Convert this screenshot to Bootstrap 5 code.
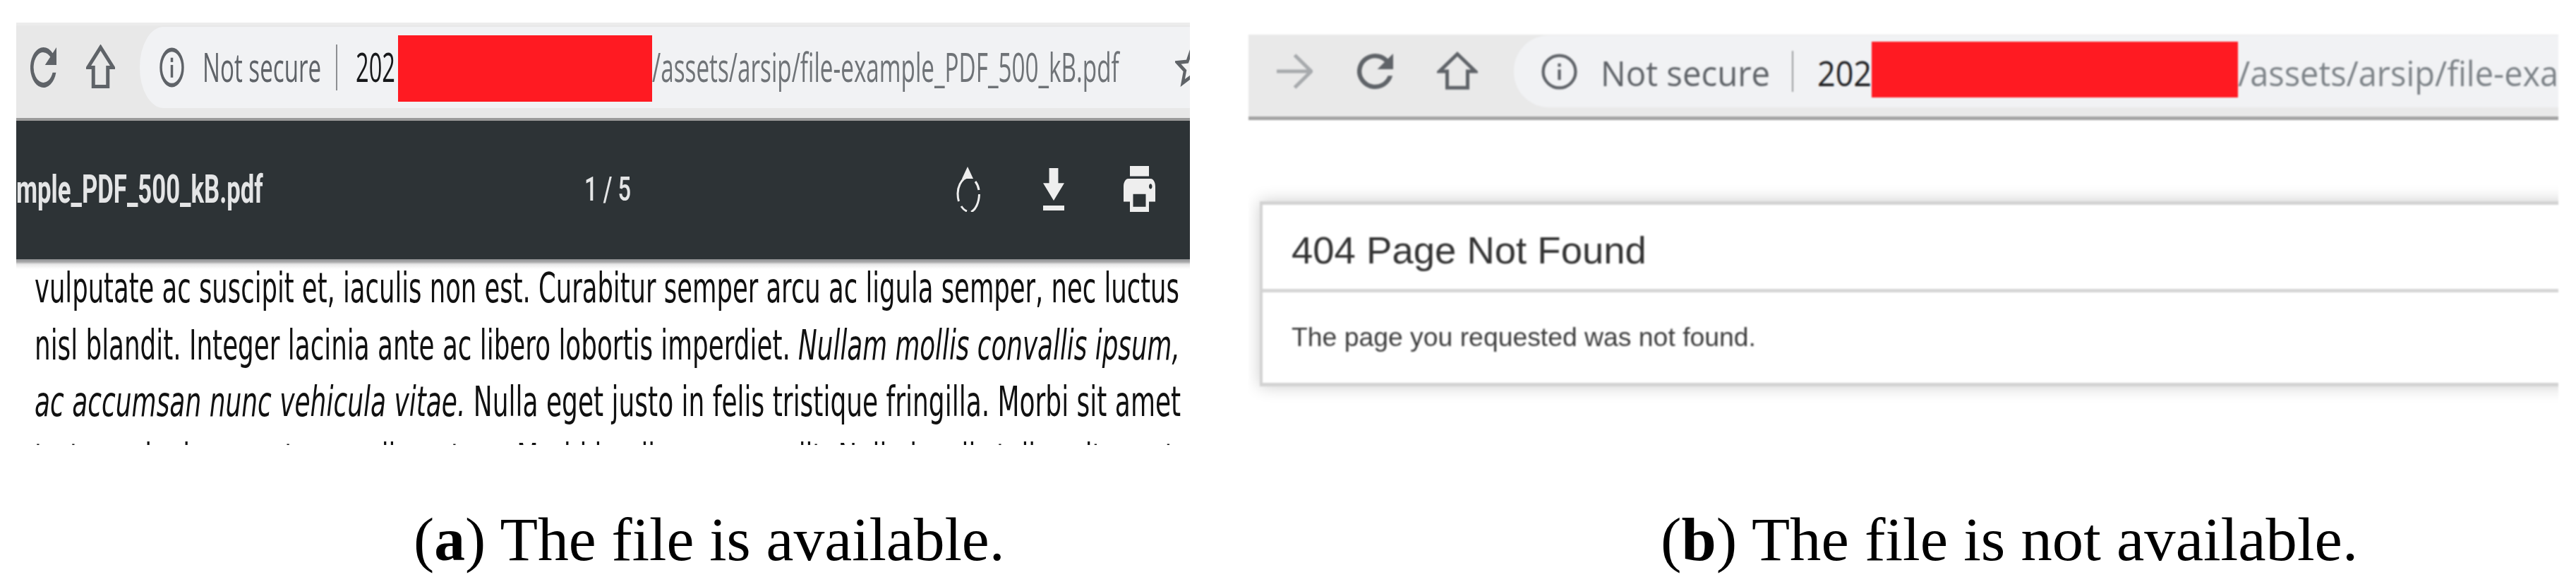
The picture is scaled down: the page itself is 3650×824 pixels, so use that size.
<!DOCTYPE html>
<html lang="en">
<head>
    <meta charset="UTF-8">
    <title>The file is available / not available</title>
    <link href="https://cdn.jsdelivr.net/npm/bootstrap@5.3.1/dist/css/bootstrap.min.css" rel="stylesheet">
    <script src="https://cdn.jsdelivr.net/npm/bootstrap@5.3.1/dist/js/bootstrap.bundle.min.js"></script>
    <style>
        body{background:#fff;width:3650px;height:824px;overflow:hidden}
        .fit{display:block;white-space:nowrap;transform-origin:left center}
        svg{display:block;flex:none}

        /* left shot */
        .shot-a{width:1663px;margin:32px 0 0 23px;overflow:hidden;filter:blur(.4px)}
        .bar-a{height:139px;padding:0 0 12px 20px;background:#e8e8e8;border-top:4px solid #ececec;border-bottom:4px solid #9a9a9a;box-sizing:border-box}
        .reload-a{width:37px;height:57px}
        .home-a{width:41px;height:65px;margin-left:42px}
        .url-a{height:115px;margin-left:35px;padding-left:28px;background:#f1f2f4;border-radius:34px 0 0 34px/57px 0 0 57px;font:56px "Open Sans",sans-serif}
        .info-a{width:35px;height:57px}
        .sec-a{width:168px;margin-left:26px;transform:scaleX(.592);color:#5f6368;line-height:60px;margin-top:-4px}
        .div-a{width:2px;height:65px;margin-left:21px;background:#8d8f92}
        .ip-a{width:60px;margin-left:26px;transform:scaleX(.583);color:#17181a;line-height:60px;margin-top:-4px}
        .red-a{width:360px;height:94px;margin-top:3px;background:#ff1a22;flex:none}
        .path-a{width:662px;transform:scaleX(.594);color:#6f7377;line-height:60px;margin-top:-4px}
        .star-a{width:46px;height:57px;margin-left:79px;margin-top:-2px}
        .dark-a{height:196px;background:#2d3336;color:#e4e5e6;padding-bottom:3px}
        .name-a{width:350px;font:700 55px/60px Roboto,sans-serif;transform:scaleX(.631)}
        .page-a{width:66px;margin-left:455px;font:500 49px/60px Roboto,sans-serif;transform:scaleX(.666)}
        .rot-a{width:34px;height:64px;margin-left:461px}
        .down-a{width:30px;height:60px;margin-left:89px}
        .print-a{width:45px;height:65px;margin-left:84px}
        .pdf-a{height:263px;padding-left:26px;overflow:hidden;background:linear-gradient(#8f9193 0,#a9aaab 4px,#e6e6e6 7px,#f2f2f2 10px,#fff 14px);font:58px/80.5px "DejaVu Sans",sans-serif;color:#111}
        .pdf-a>div{margin-top:1px}
        .l1{transform:scaleX(.61)}
        .l2{transform:scaleX(.616)}
        .l3{transform:scaleX(.62)}
        .l4{transform:scaleX(.61)}
        .cap-a{margin:84px 0 0 586px}

        /* right shot */
        .shot-b{width:1856px;margin:49px 0 0 83px;height:531px;overflow:hidden;filter:blur(.8px)}
        .bar-b{height:121px;padding:1px 0 13px 40px;background:#e9e9e9;border-bottom:5px solid #a3a3a3}
        .arrow-b{width:51px;height:50px}
        .reload-b{width:51px;height:50px;margin-left:63px}
        .home-b{width:58px;height:56px;margin-left:62px}
        .url-b{height:102px;margin-left:51px;padding-left:39px;background:#f1f2f4;border-radius:50px 0 0 50px;font:50px "Open Sans",sans-serif;overflow:hidden}
        .info-b{width:51px;height:51px}
        .sec-b{width:240px;margin-left:33px;transform:scaleX(.947);color:#5f6368;line-height:60px;margin-top:4px}
        .div-b{width:3px;height:58px;margin-left:31px;background:#9a9c9e}
        .ip-b{width:77px;margin-left:34px;transform:scaleX(.898);color:#202124;line-height:60px;margin-top:4px}
        .red-b{width:519px;height:79px;margin-top:-6px;background:#ff1a22;flex:none}
        .path-b{width:454px;flex:none;transform:scaleX(.939);color:#7d8388;line-height:60px;margin-top:4px}
        .page-b{padding:115px 0 0 16px}
        .notfound{width:1880px;border:solid #d3d3d3;border-width:5px 0 5px 4px;border-radius:0;box-shadow:0 0 22px rgba(0,0,0,.2)}
        .notfound .card-header{height:124px;padding:34px 0 0 41px;background:#fff;border-bottom:5px solid #d6d6d6;border-radius:0;font:54px/60px "Liberation Sans",sans-serif;color:#333}
        .notfound .card-body{height:128px;flex:none;padding:43px 0 0 41px;font:36px/42px "Liberation Sans",sans-serif;color:#3d3d3d}
        .title-b{transform:scaleX(1.009)}
        .msg-b{transform:scaleX(1.037)}
        .cap-b{margin:134px 0 0 667px}

        .caption{height:100px;font:87px/100px "Liberation Serif",serif;color:#000}
        .cap-a .fit{transform:scaleX(1.007)}
        .cap-b .fit{transform:scaleX(1.019)}
    </style>
</head>
<body>

<div class="d-flex align-items-start">

    <!-- (a) pdf viewer -->
    <div>
        <div class="shot-a">
            <div class="bar-a d-flex align-items-center">
                <svg class="reload-a" viewBox="4 4 16 16" preserveAspectRatio="none"><path fill="#5f6368" d="M17.65 6.35A7.95 7.95 0 0 0 12 4a8 8 0 1 0 7.73 10h-2.08A6 6 0 1 1 12 6c1.66 0 3.14.69 4.22 1.78L13 11h7V4z"/></svg>
                <svg class="home-a" viewBox="0 0 24 24" preserveAspectRatio="none"><path fill="none" stroke="#5f6368" stroke-width="5" vector-effect="non-scaling-stroke" d="M12 1.5 22.5 12H18V22H6V12H1.5z"/></svg>
                <div class="url-a d-flex align-items-center flex-grow-1">
                    <svg class="info-a" viewBox="0 0 24 24" preserveAspectRatio="none"><circle cx="12" cy="12" r="10.6" fill="none" stroke="#5f6368" stroke-width="2.4"/><rect x="10.8" y="10.5" width="2.4" height="7.5" fill="#5f6368"/><rect x="10.8" y="6.2" width="2.4" height="2.6" fill="#5f6368"/></svg>
                    <span class="fit sec-a">Not secure</span>
                    <span class="div-a"></span>
                    <span class="fit ip-a">202</span>
                    <span class="red-a"></span>
                    <span class="fit path-a">/assets/arsip/file-example_PDF_500_kB.pdf</span>
                    <svg class="star-a" viewBox="0 0 24 24" preserveAspectRatio="none"><path fill="none" stroke="#5f6368" stroke-width="2.2" d="M12 2l2.9 6.9 7.4.6-5.6 4.9 1.7 7.3L12 17.8l-6.4 3.9 1.7-7.3L1.7 9.5l7.4-.6z"/></svg>
                </div>
            </div>
            <div class="dark-a d-flex align-items-center">
                <span class="fit name-a">mple_PDF_500_kB.pdf</span>
                <span class="fit page-a">1 / 5</span>
                <svg class="rot-a" viewBox="0 0 34 64" preserveAspectRatio="none"><path fill="#eee" d="M16 0 24 17H8z"/><path fill="none" stroke="#eee" stroke-width="3" d="M15 15C6 18 2 30 2 38c0 4 .5 8 1.500 11M7 56c2 3 5 6 8 7M21 64c6-3 11-12 11.500-25M32 33c-.5-4-2-8-5-12"/></svg>
                <svg class="down-a" viewBox="5 3 14 17" preserveAspectRatio="none"><path fill="#eee" d="M19 9h-4V3H9v6H5l7 7 7-7zM5 18v2h14v-2H5z"/></svg>
                <svg class="print-a" viewBox="2 3 20 18" preserveAspectRatio="none"><path fill="#eee" d="M19 8H5c-1.660 0-3 1.340-3 3v6h4v4h12v-4h4v-6c0-1.660-1.340-3-3-3zm-3 11H8v-5h8v5zm3-7c-.55 0-1-.45-1-1s.45-1 1-1 1 .45 1 1-.45 1-1 1zm-1-9H6v4h12V3z"/></svg>
            </div>
            <div class="pdf-a">
                <div>
                    <span class="fit l1">vulputate ac suscipit et, iaculis non est. Curabitur semper arcu ac ligula semper, nec luctus</span>
                    <span class="fit l2">nisl blandit. Integer lacinia ante ac libero lobortis imperdiet. <em>Nullam mollis convallis ipsum,</em></span>
                    <span class="fit l3"><em>ac accumsan nunc vehicula vitae.</em> Nulla eget justo in felis tristique fringilla. Morbi sit amet</span>
                    <span class="fit l4">tortor quis risus auctor condimentum. Morbi in ullamcorper elit. Nulla iaculis tellus sit amet mauris</span>
                </div>
            </div>
        </div>
        <div class="caption cap-a"><span class="fit">(<b>a</b>) The file is available.</span></div>
    </div>

    <!-- (b) 404 page -->
    <div>
        <div class="shot-b">
            <div class="bar-b d-flex align-items-center">
                <svg class="arrow-b" viewBox="0 0 24 24" preserveAspectRatio="none"><path fill="none" stroke="#a7aaad" stroke-width="2.4" d="M0 12H22M12 1l11 11-11 11"/></svg>
                <svg class="reload-b" viewBox="4 4 16 16" preserveAspectRatio="none"><path fill="#5f6368" d="M17.65 6.35A7.95 7.95 0 0 0 12 4a8 8 0 1 0 7.73 10h-2.08A6 6 0 1 1 12 6c1.66 0 3.14.69 4.22 1.78L13 11h7V4z"/></svg>
                <svg class="home-b" viewBox="0 0 24 24" preserveAspectRatio="none"><path fill="none" stroke="#5f6368" stroke-width="5" vector-effect="non-scaling-stroke" d="M12 1.500 22.500 12H18V22H6V12H1.500z"/></svg>
                <div class="url-b d-flex align-items-center flex-grow-1">
                    <svg class="info-b" viewBox="0 0 24 24"><circle cx="12" cy="12" r="10.800" fill="none" stroke="#5f6368" stroke-width="2"/><rect x="11" y="10.500" width="2" height="7" fill="#5f6368"/><rect x="11" y="6.500" width="2" height="2.200" fill="#5f6368"/></svg>
                    <span class="fit sec-b">Not secure</span>
                    <span class="div-b"></span>
                    <span class="fit ip-b">202</span>
                    <span class="red-b"></span>
                    <span class="fit path-b">/assets/arsip/file-exa</span>
                </div>
            </div>
            <div class="page-b">
                <div class="card notfound">
                    <div class="card-header"><span class="fit title-b">404 Page Not Found</span></div>
                    <div class="card-body"><span class="fit msg-b">The page you requested was not found.</span></div>
                </div>
            </div>
        </div>
        <div class="caption cap-b"><span class="fit">(<b>b</b>) The file is not available.</span></div>
    </div>

</div>

</body>
</html>
